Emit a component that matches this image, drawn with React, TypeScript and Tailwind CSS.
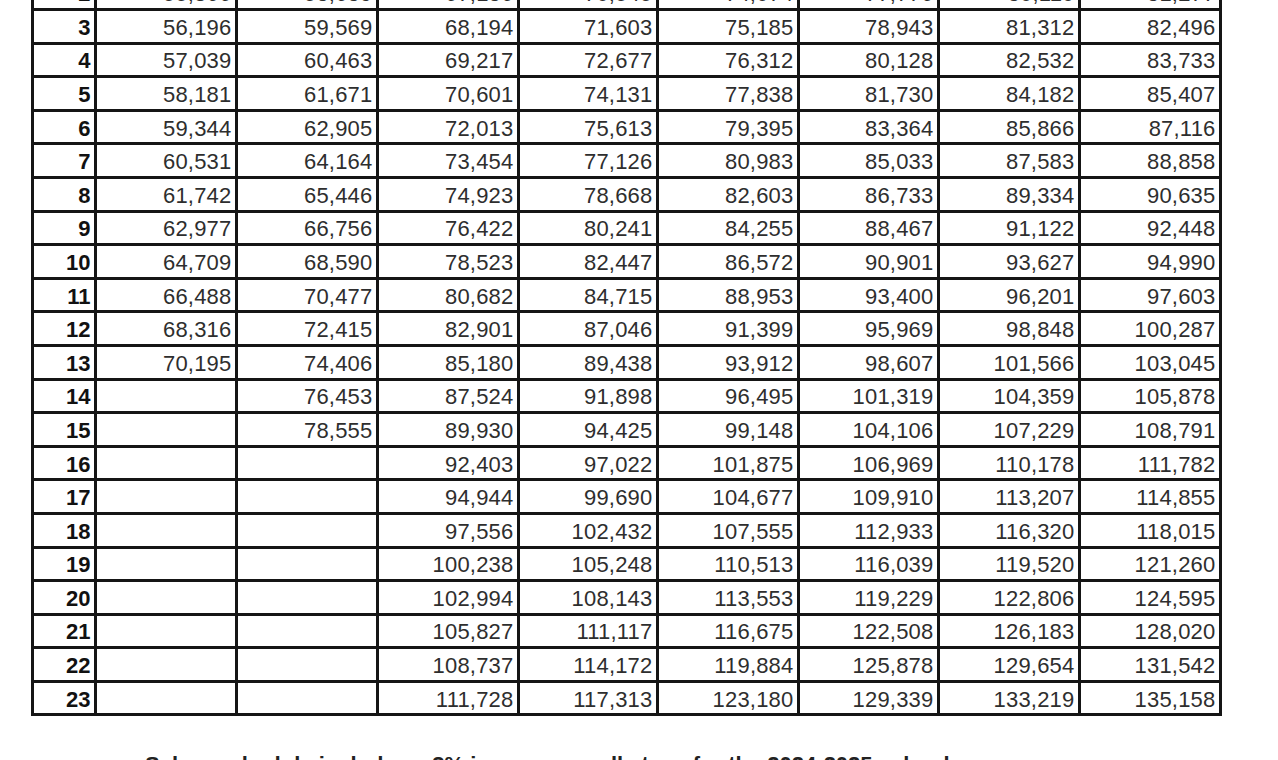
import React from 'react';

// step -> values per lane (empty string = no value for that step)
const ROWS: [number, string[]][] = [
  [2, ['55,366', '58,689', '67,186', '70,545', '74,074', '77,776', '80,110', '81,277']],
  [3, ['56,196', '59,569', '68,194', '71,603', '75,185', '78,943', '81,312', '82,496']],
  [4, ['57,039', '60,463', '69,217', '72,677', '76,312', '80,128', '82,532', '83,733']],
  [5, ['58,181', '61,671', '70,601', '74,131', '77,838', '81,730', '84,182', '85,407']],
  [6, ['59,344', '62,905', '72,013', '75,613', '79,395', '83,364', '85,866', '87,116']],
  [7, ['60,531', '64,164', '73,454', '77,126', '80,983', '85,033', '87,583', '88,858']],
  [8, ['61,742', '65,446', '74,923', '78,668', '82,603', '86,733', '89,334', '90,635']],
  [9, ['62,977', '66,756', '76,422', '80,241', '84,255', '88,467', '91,122', '92,448']],
  [10, ['64,709', '68,590', '78,523', '82,447', '86,572', '90,901', '93,627', '94,990']],
  [11, ['66,488', '70,477', '80,682', '84,715', '88,953', '93,400', '96,201', '97,603']],
  [12, ['68,316', '72,415', '82,901', '87,046', '91,399', '95,969', '98,848', '100,287']],
  [13, ['70,195', '74,406', '85,180', '89,438', '93,912', '98,607', '101,566', '103,045']],
  [14, ['', '76,453', '87,524', '91,898', '96,495', '101,319', '104,359', '105,878']],
  [15, ['', '78,555', '89,930', '94,425', '99,148', '104,106', '107,229', '108,791']],
  [16, ['', '', '92,403', '97,022', '101,875', '106,969', '110,178', '111,782']],
  [17, ['', '', '94,944', '99,690', '104,677', '109,910', '113,207', '114,855']],
  [18, ['', '', '97,556', '102,432', '107,555', '112,933', '116,320', '118,015']],
  [19, ['', '', '100,238', '105,248', '110,513', '116,039', '119,520', '121,260']],
  [20, ['', '', '102,994', '108,143', '113,553', '119,229', '122,806', '124,595']],
  [21, ['', '', '105,827', '111,117', '116,675', '122,508', '126,183', '128,020']],
  [22, ['', '', '108,737', '114,172', '119,884', '125,878', '129,654', '131,542']],
  [23, ['', '', '111,728', '117,313', '123,180', '129,339', '133,219', '135,158']],
];

const COL_WIDTHS = ['w-[141px]', 'w-[141px]', 'w-[141px]', 'w-[139px]', 'w-[141px]', 'w-[140px]', 'w-[141px]', 'w-[141px]'];

export default function App() {
  return (
    <div className="h-[760px] w-[1278px] overflow-hidden bg-white font-['Liberation_Sans',Arial,sans-serif]">
      {/* Salary table */}
      <div className="ml-[31px] mt-[-22.6px] w-fit border-l-[3px] border-[#151515]">
        {ROWS.map(([step, values]) => (
          <div key={step} className="flex h-[33.6px] border-b-[3px] border-[#151515]">
            <div className="flex w-[62.5px] items-center justify-end border-r-[3px] border-[#151515] pr-[3px] pt-[2px] text-[22px] font-bold text-[#111]">
              {step}
            </div>
            {values.map((v, i) => (
              <div
                key={i}
                className={`flex ${COL_WIDTHS[i]} items-center justify-end border-r-[3px] border-[#151515] pr-[3px] pt-[2px] text-[22px] tracking-[0.2px] text-[#2e2e2e]`}
              >
                {v}
              </div>
            ))}
          </div>
        ))}
      </div>

      {/* Footnote (cut off by the page edge) */}
      <p className="ml-[145px] mt-[38px] text-[22px] leading-[22px] font-bold text-[#222]">
        Salary schedule includes a 3% increase on all steps for the 2024-2025 school year.
      </p>
    </div>
  );
}
